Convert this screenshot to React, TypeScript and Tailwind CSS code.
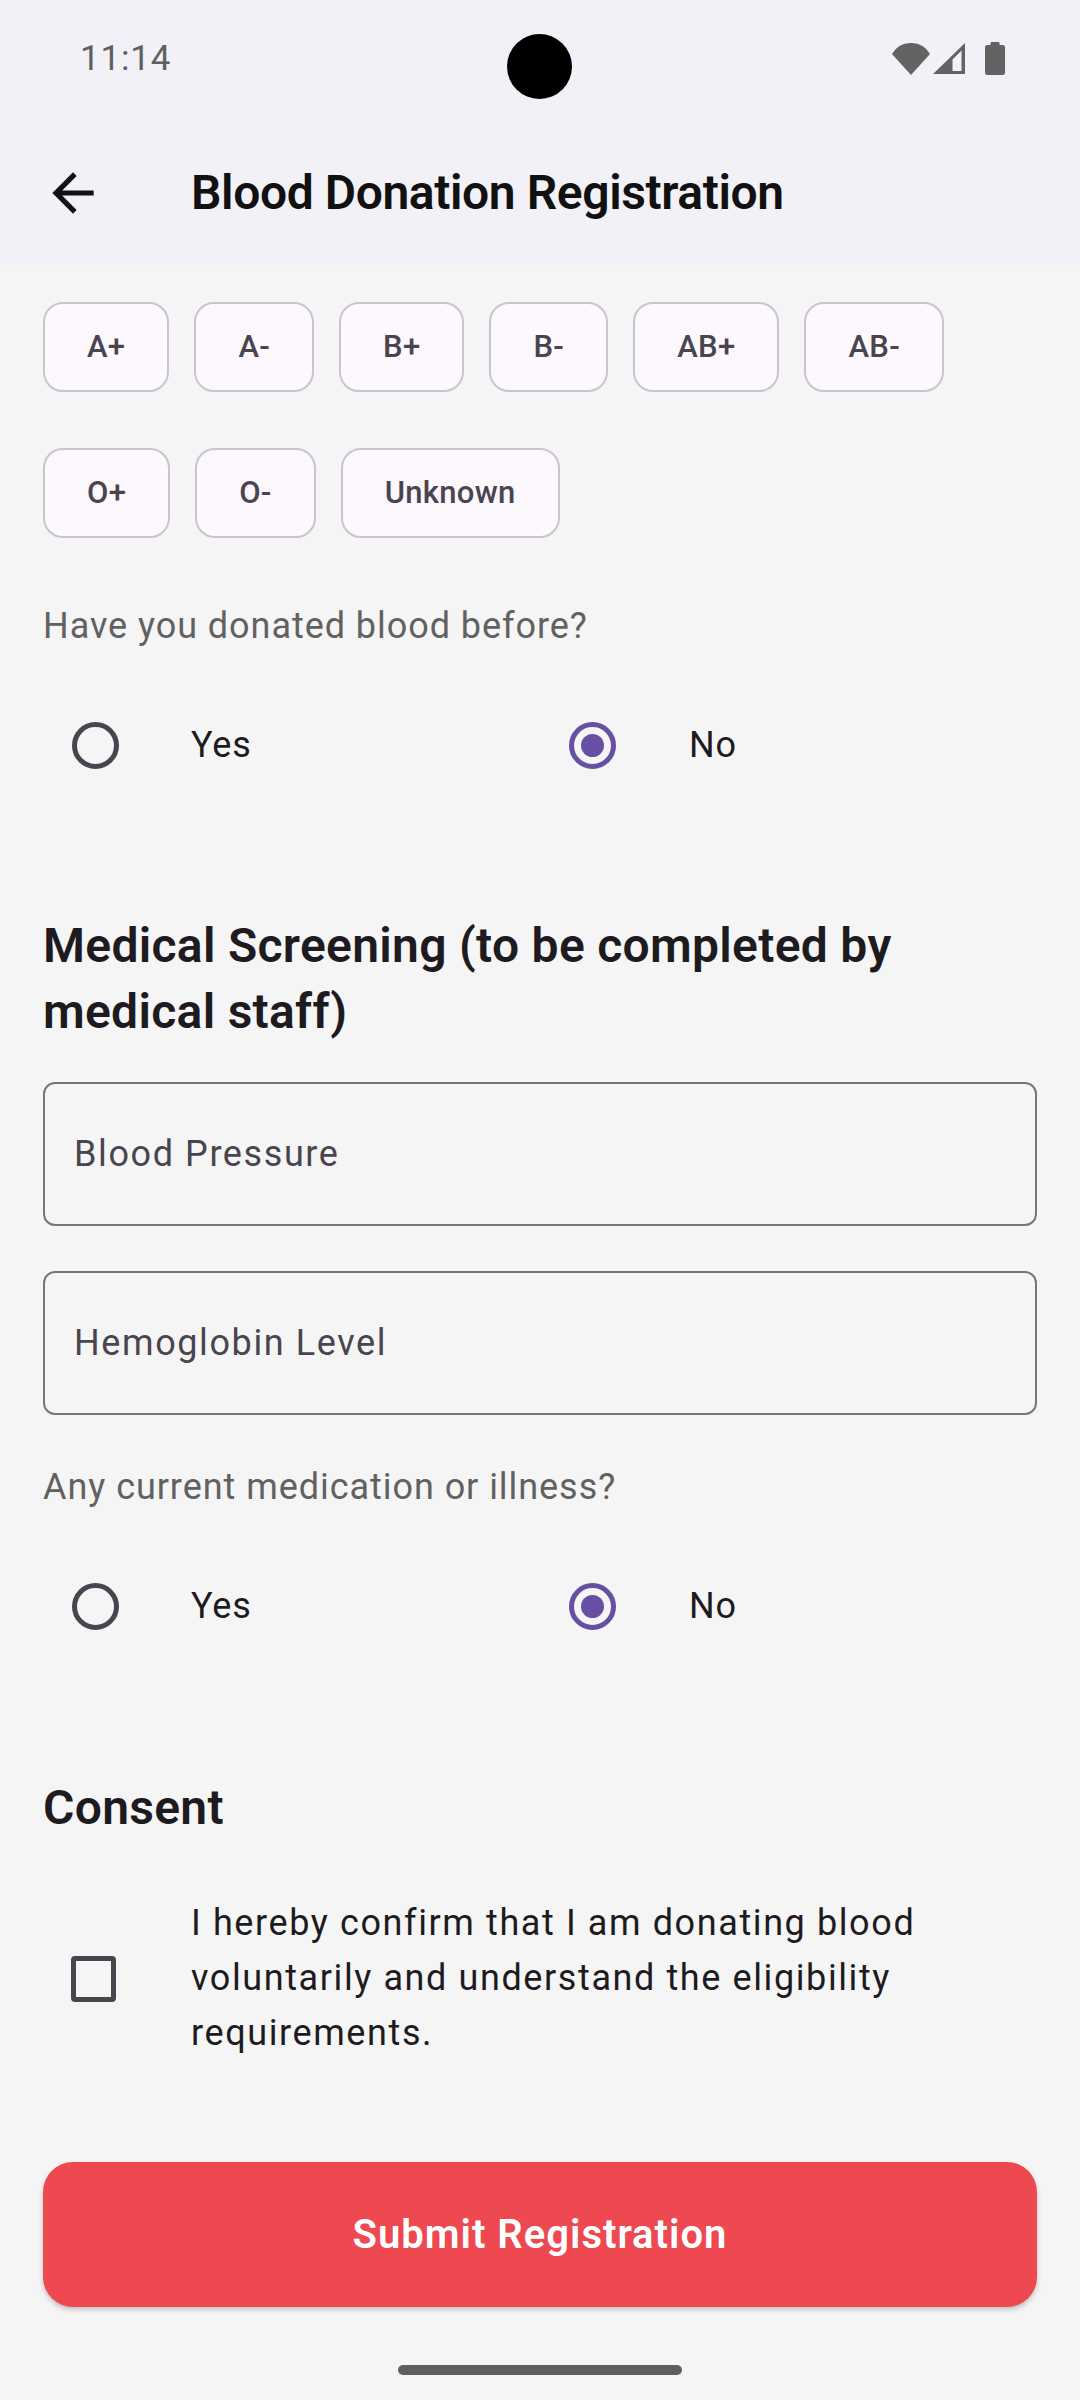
import React from "react";

function Radio({ selected }: { selected: boolean }) {
  return selected ? (
    <div className="w-[47px] h-[47px] rounded-full border-[5px] border-[#6750a4] flex items-center justify-center">
      <div className="w-[23px] h-[23px] rounded-full bg-[#6750a4]" />
    </div>
  ) : (
    <div className="w-[47px] h-[47px] rounded-full border-[5px] border-[#49454f]" />
  );
}

function RadioRow() {
  return (
    <div className="flex h-[96px]">
      <div className="flex-1 flex items-center">
        <div className="w-[148px] pl-[29px] flex">
          <Radio selected={false} />
        </div>
        <span className="text-[36px] leading-[48px] tracking-[0.8px] text-[#1d1b20]">Yes</span>
      </div>
      <div className="flex-1 flex items-center">
        <div className="w-[149px] pl-[29px] flex">
          <Radio selected={true} />
        </div>
        <span className="text-[36px] leading-[48px] tracking-[0.8px] text-[#1d1b20]">No</span>
      </div>
    </div>
  );
}

function Chip({ label }: { label: string }) {
  return (
    <div className="h-[90px] px-[42px] flex items-center justify-center rounded-[20px] border-2 border-[#cac4d0] bg-[#fdf7fe] text-[31px] font-medium tracking-[0.3px] text-[#49454f]">
      {label}
    </div>
  );
}

function Field({ label }: { label: string }) {
  return (
    <div className="h-[144px] rounded-[12px] border-2 border-[#79747e] flex items-center pl-[29px]">
      <span className="text-[36px] leading-[48px] tracking-[1.6px] text-[#49454f]">{label}</span>
    </div>
  );
}

export default function App() {
  return (
    <div className="w-[1080px] min-h-[2400px] bg-[#f5f5f5] font-['Roboto',sans-serif] flex flex-col">
      {/* top area */}
      <div className="bg-[#f2f1f7] relative">
        <div className="h-[121px] relative flex items-start">
          <span className="absolute left-[80px] top-[39px] text-[35px] leading-[40px] text-[#5f5f5f] tracking-[0.8px]">11:14</span>
          <div className="absolute left-[507px] top-[34px] w-[65px] h-[65px] rounded-full bg-black" />
          <div className="absolute left-[892px] top-[42px] flex items-end gap-[3px]">
            <svg width="38" height="32" viewBox="0 0 38 32">
              <path d="M19 32 L0 11 A21.9 21.9 0 0 1 38 11 Z" fill="#636363" />
            </svg>
            <svg width="33" height="32" viewBox="0 0 33 32">
              <path d="M0 31 L32 0 L32 31 Z M19.5 28 L28.5 28 L28.5 7.5 L19.5 16.5 Z" fill="#636363" fillRule="evenodd" />
            </svg>
            <svg width="20" height="33" viewBox="0 0 20 33" className="ml-[16px]">
              <rect x="5.5" y="0" width="9" height="4" rx="1" fill="#636363" />
              <rect x="0" y="3" width="20" height="30" rx="2.5" fill="#636363" />
            </svg>
          </div>
        </div>
        <div className="h-[144px] flex items-center">
          <div className="w-[191px] flex pl-[42px]">
            <svg width="62" height="62" viewBox="0 0 24 24">
              <path d="M20 11H7.83l5.59-5.59L12 4l-8 8 8 8 1.41-1.41L7.83 13H20v-2z" fill="#111111" />
            </svg>
          </div>
          <span className="text-[48px] leading-[60px] font-semibold tracking-[-0.4px] text-[#111111]">Blood Donation Registration</span>
        </div>
      </div>

      {/* content */}
      <div className="px-[43px] pt-[37px] flex flex-col">
        <div className="flex flex-wrap gap-x-[25px] gap-y-[56px]">
          {["A+", "A-", "B+", "B-", "AB+", "AB-", "O+", "O-", "Unknown"].map((l) => (
            <Chip key={l} label={l} />
          ))}
        </div>

        <p className="mt-[64px] text-[36px] leading-[48px] tracking-[0.95px] text-[#616161]">Have you donated blood before?</p>
        <div className="mt-[47px]">
          <RadioRow />
        </div>

        <h2 className="mt-[120px] text-[48px] leading-[66px] font-semibold tracking-[0.3px] text-[#1d1b20]">
          Medical Screening (to be completed by medical staff)
        </h2>

        <div className="mt-[37px]">
          <Field label="Blood Pressure" />
        </div>
        <div className="mt-[45px]">
          <Field label="Hemoglobin Level" />
        </div>

        <p className="mt-[48px] text-[36px] leading-[48px] tracking-[0.95px] text-[#616161]">Any current medication or illness?</p>
        <div className="mt-[47px]">
          <RadioRow />
        </div>

        <h2 className="mt-[121px] text-[48px] leading-[66px] font-semibold tracking-[0.3px] text-[#1d1b20]">Consent</h2>

        <div className="mt-[55px] flex items-center">
          <div className="w-[148px] pl-[28px] flex">
            <div className="w-[45px] h-[46px] rounded-[4px] border-[5px] border-[#49454f]" />
          </div>
          <p className="flex-1 pr-[30px] text-[36px] leading-[55px] tracking-[1.6px] text-[#1d1b20]">
            I hereby confirm that I am donating blood voluntarily and understand the eligibility requirements.
          </p>
        </div>

        <button className="mt-[101px] h-[145px] w-full rounded-[30px] bg-[#ee4851] shadow-[0_3px_5px_rgba(0,0,0,0.2)] flex items-center justify-center">
          <span className="text-[40px] font-semibold text-white tracking-[1px]">Submit Registration</span>
        </button>
      </div>

      <div className="flex-1" />
      <div className="h-[94px] flex justify-center pt-[58px]">
        <div className="w-[284px] h-[10px] rounded-full bg-[#5f5f5f]" />
      </div>
    </div>
  );
}
